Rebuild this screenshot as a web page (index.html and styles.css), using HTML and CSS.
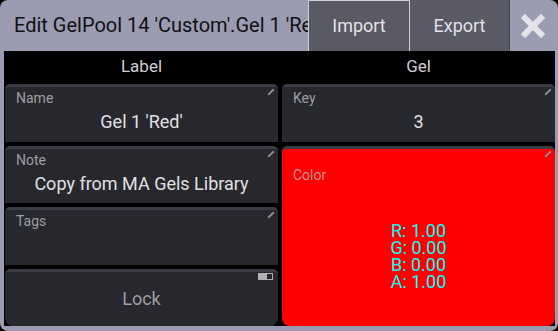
FILE: index.html
```html
<!DOCTYPE html>
<html lang="en">
<head>
    <meta charset="UTF-8">
    <title>Edit GelPool 14</title>
    <link rel="stylesheet" href="styles.css">
</head>
<body>
    <div class="window">
        <div class="titlebar">
            <div class="title">Edit GelPool 14 'Custom'.Gel 1 'Red'</div>
            <div class="tb-btn import">Import</div>
            <div class="tb-btn export">Export</div>
            <div class="close">
                <svg width="24" height="24" viewBox="0 0 24 24">
                    <path d="M4 4 L20 20 M20 4 L4 20" stroke="#e4e4e8" stroke-width="6" stroke-linecap="square"/>
                </svg>
            </div>
        </div>
        <div class="content">
            <div class="col-heads">
                <div class="col-head">Label</div>
                <div class="col-head">Gel</div>
            </div>
            <div class="grid">
                <div class="cell">
                    <span class="pencil"></span>
                    <div class="cell-label">Name</div>
                    <div class="cell-value">Gel 1 'Red'</div>
                </div>
                <div class="cell">
                    <span class="pencil"></span>
                    <div class="cell-label">Key</div>
                    <div class="cell-value">3</div>
                </div>
                <div class="cell">
                    <span class="pencil"></span>
                    <div class="cell-label">Note</div>
                    <div class="cell-value">Copy from MA Gels Library</div>
                </div>
                <div class="cell color-cell">
                    <span class="pencil"></span>
                    <div class="color-label">Color</div>
                    <div class="rgba">
                        <div>R: 1.00</div>
                        <div>G: 0.00</div>
                        <div>B: 0.00</div>
                        <div>A: 1.00</div>
                    </div>
                </div>
                <div class="cell">
                    <span class="pencil"></span>
                    <div class="cell-label">Tags</div>
                </div>
                <div class="cell lock-cell">
                    <span class="toggle"><span class="toggle-on"></span></span>
                    <div class="lock-text">Lock</div>
                </div>
            </div>
        </div>
    </div>
</body>
</html>
```

FILE: styles.css
```css
* {
    margin: 0;
    padding: 0;
    box-sizing: border-box;
    font-family: Roboto, "Liberation Sans", sans-serif;
}

body {
    background-color: #000;
    width: 558px;
    height: 331px;
    overflow: hidden;
}

.window {
    width: 558px;
    height: 331px;
    background-color: #9b9bb1;
    border-radius: 8px;
    padding: 0 3px 5px 4px;
    display: flex;
    flex-direction: column;
}

.titlebar {
    display: flex;
    height: 51px;
    flex-shrink: 0;
}

.title {
    flex: 1;
    overflow: hidden;
    white-space: nowrap;
    padding-left: 10px;
    font-size: 20px;
    line-height: 51px;
    color: #111114;
}

.tb-btn {
    background-color: #5a5a67;
    color: #e2e2e6;
    font-size: 18px;
    text-align: center;
    line-height: 51px;
}

.import {
    width: 102px;
    height: 52px;
    line-height: 50px;
    border: 1px solid #cfcfd8;
}

.export {
    width: 100px;
    border-right: 1px solid #44444e;
}

.close {
    width: 45px;
    display: flex;
    align-items: center;
    justify-content: center;
}

.content {
    flex: 1;
    background-color: #000;
    display: flex;
    flex-direction: column;
    padding-left: 1px;
}

.col-heads {
    display: grid;
    grid-template-columns: 1fr 1fr;
    gap: 4px;
    height: 33px;
    flex-shrink: 0;
}

.col-head {
    color: #cfcfd4;
    font-size: 17px;
    text-align: center;
    line-height: 31px;
}

.grid {
    flex: 1;
    display: grid;
    grid-template-columns: 1fr 1fr;
    grid-template-rows: repeat(4, 1fr);
    gap: 4px;
}

.cell {
    position: relative;
    background-color: #27272e;
    border-top: 3px solid #3b3b45;
    border-radius: 5px 5px 0 0;
    padding: 3px 11px 0;
}

.cell-label {
    font-size: 14px;
    color: #9d9da2;
    line-height: 17px;
}

.cell-value {
    font-size: 18px;
    color: #e0e0e4;
    text-align: center;
    line-height: 22px;
    margin-top: 4px;
}

.pencil {
    position: absolute;
    top: 1px;
    right: 3px;
    width: 8px;
    height: 2px;
    background-color: #8a8a90;
    transform: rotate(-45deg);
    transform-origin: center;
    margin-top: 3px;
}

.color-cell {
    grid-row: 2 / span 3;
    grid-column: 2;
    background-color: #ff0000;
    border-radius: 5px 5px 8px 8px;
    display: flex;
    flex-direction: column;
}

.color-label {
    font-size: 14px;
    color: #c79393;
    margin-top: 15px;
}

.rgba {
    margin-top: 39px;
    text-align: center;
    color: #00ffff;
    font-size: 18px;
    line-height: 17px;
}

.lock-cell {
    border-radius: 5px 5px 8px 8px;
    display: flex;
    align-items: center;
    justify-content: center;
}

.lock-text {
    font-size: 18px;
    color: #9d9da2;
    margin-top: -4px;
}

.toggle {
    position: absolute;
    top: 1px;
    right: 5px;
    width: 15px;
    height: 7px;
    border: 1px solid #b0b0b6;
    display: flex;
}

.toggle-on {
    width: 8px;
    background-color: #b0b0b6;
}
```
